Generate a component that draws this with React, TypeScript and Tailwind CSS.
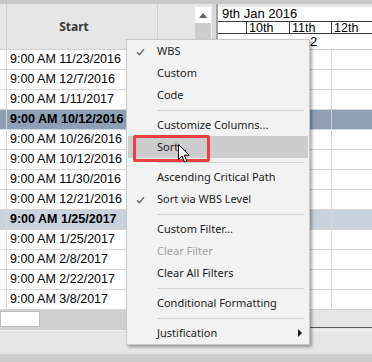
import React from 'react';

type Row = { t: string; hl?: 'dark' | 'light' };

const rows: Row[] = [
  { t: '9:00 AM 11/23/2016' },
  { t: '9:00 AM 12/7/2016' },
  { t: '9:00 AM 1/11/2017' },
  { t: '9:00 AM 10/12/2016', hl: 'dark' },
  { t: '9:00 AM 10/26/2016' },
  { t: '9:00 AM 10/12/2016' },
  { t: '9:00 AM 11/30/2016' },
  { t: '9:00 AM 12/21/2016' },
  { t: '9:00 AM 1/25/2017', hl: 'light' },
  { t: '9:00 AM 1/25/2017' },
  { t: '9:00 AM 2/8/2017' },
  { t: '9:00 AM 2/22/2017' },
  { t: '9:00 AM 3/8/2017' },
];

const rowBg = (r: Row) =>
  r.hl === 'dark' ? 'bg-[#8e9fb6] font-bold' : r.hl === 'light' ? 'bg-[#c9d3dd] font-bold' : 'bg-white';

type Item = { label?: string; check?: boolean; disabled?: boolean; active?: boolean; sub?: boolean; sep?: boolean };

const items: Item[] = [
  { label: 'WBS', check: true },
  { label: 'Custom' },
  { label: 'Code' },
  { sep: true },
  { label: 'Customize Columns...' },
  { label: 'Sort...', active: true },
  { sep: true },
  { label: 'Ascending Critical Path' },
  { label: 'Sort via WBS Level', check: true },
  { sep: true },
  { label: 'Custom Filter...' },
  { label: 'Clear Filter', disabled: true },
  { label: 'Clear All Filters' },
  { sep: true },
  { label: 'Conditional Formatting' },
  { sep: true },
  { label: 'Justification', sub: true },
];

function Check() {
  return (
    <svg width="9" height="8" viewBox="0 0 9 8" className="absolute left-[8px] top-[8px]">
      <path d="M1 4.2 L3.4 6.6 L8 1.2" fill="none" stroke="#6b6b6b" strokeWidth="1.4" />
    </svg>
  );
}

function ContextMenu() {
  return (
    <div className="absolute left-[126px] top-[39px] w-[184px] h-[306px] bg-[#f2f2f2] border border-[#c8c8c8] shadow-[2px_2px_3px_rgba(0,0,0,0.35)] font-['Noto_Sans',sans-serif] text-[11px]">
      {items.map((it, i) =>
        it.sep ? (
          <div key={i} className="h-[8px] flex items-center pl-[30px] pr-[5px]">
            <div className="h-px w-full bg-[#d2d2d2]" />
          </div>
        ) : (
          <div
            key={i}
            className={`relative h-[22px] mx-px flex items-center pl-[29px] ${it.active ? 'bg-[#cdcdcd]' : ''} ${
              it.disabled ? 'text-[#a3a3a3]' : 'text-[#1c1c1c]'
            }`}
          >
            {it.check && <Check />}
            {it.label}
            {it.sub && (
              <svg width="5" height="8" viewBox="0 0 5 8" className="absolute right-[5px] top-[7px]">
                <path d="M0 0 L4 4 L0 8 Z" fill="#1c1c1c" />
              </svg>
            )}
          </div>
        )
      )}
    </div>
  );
}

export default function App() {
  return (
    <div className="relative w-[372px] h-[362px] overflow-hidden bg-[#e6e6e6] font-['Liberation_Sans',Arial,sans-serif] text-[12.5px] text-black">
      <div className="h-[4px] bg-[#c8c8c8]" />
      <div className="flex h-[306px]">
        {/* Task grid */}
        <div className="w-[195px] flex flex-col">
          <div className="h-[46px] flex bg-[#e6e6e6] border-b border-[#cfcfcf]">
            <div className="w-[7px] border-r border-[#cfcfcf]" />
            <div className="w-[151px] border-r border-[#cfcfcf] flex items-center justify-center pr-[16px] font-['Noto_Sans',sans-serif] font-bold text-[12px] text-[#3a3a3a]">
              Start
            </div>
            <div className="flex-1" />
          </div>
          {rows.map((r, i) => (
            <div key={i} className={`h-[20px] flex border-b border-[#d6d6d6] ${rowBg(r)}`}>
              <div className="w-[7px] border-r border-[#d6d6d6]" />
              <div className="w-[151px] border-r border-[#d6d6d6] pl-[3px] flex items-center whitespace-nowrap">{r.t}</div>
              <div className="flex-1" />
            </div>
          ))}
        </div>

        {/* Vertical scrollbar */}
        <div className="w-[16px] flex flex-col pt-[3px] bg-[#e6e6e6]">
          <div className="h-[16px] bg-white flex items-center justify-center">
            <svg width="8" height="5" viewBox="0 0 8 5">
              <path d="M0 5 L4 0 L8 5 Z" fill="#606060" />
            </svg>
          </div>
          <div className="flex-1 bg-[#cdcdcd]" />
        </div>
        <div className="w-[5px] bg-[#d8d8d8] border-l border-[#ededed]" />

        {/* Gantt */}
        <div className="flex-1 flex flex-col pt-[3px] bg-[#e6e6e6] border-l-2 border-[#a3a3a3]">
          <div className="bg-white">
            <div className="h-[15px] border-b border-[#3c3c3c] pl-[4px] text-[13px] leading-[14px]">9th Jan 2016</div>
            <div className="h-[12px] flex border-b border-[#3c3c3c] text-[12.5px] leading-[12px]">
              <div className="w-[29px] border-r border-[#3c3c3c]" />
              <div className="w-[43px] border-r border-[#3c3c3c] pl-[2px]">10th</div>
              <div className="w-[42px] border-r border-[#3c3c3c] pl-[2px]">11th</div>
              <div className="flex-1 pl-[2px]">12th</div>
            </div>
            <div className="h-[16px] border-b border-[#cfcfcf] text-[13px] leading-[16px] pl-[92px]">2</div>
          </div>
          {rows.map((r, i) => (
            <div key={i} className={`h-[20px] flex border-b border-[#d6d6d6] ${rowBg(r)}`}>
              <div className="w-[29px] border-r border-[#d6d6d6]" />
              <div className="w-[43px] border-r border-[#d6d6d6]" />
              <div className="w-[42px] border-r border-[#d6d6d6]" />
              <div className="flex-1" />
            </div>
          ))}
        </div>
      </div>

      {/* Horizontal scroll area */}
      <div className="flex h-[20px]">
        <div className="w-[216px] bg-[#d0d0d0] pt-px">
          <div className="w-[40px] h-[16px] bg-white border border-[#bdbdbd]" />
        </div>
        <div className="flex-1 border-l-2 border-[#a3a3a3] bg-[#e6e6e6]">
          <div className="h-[18px] border-b border-[#555555]" />
        </div>
      </div>
      <div className="h-px bg-[#f2f2f2]" />
      <div className="h-[23px] bg-[#e6e6e6]" />
      <div className="h-[8px] bg-[#cdcdcd]" />

      <ContextMenu />

      {/* Highlight annotation */}
      <div className="absolute left-[133px] top-[135px] w-[77px] h-[27px] border-[3px] border-[#ec4040] rounded-[2px]" />
      <svg width="13" height="20" viewBox="0 0 13 20" className="absolute left-[178px] top-[144px]">
        <path d="M0.5 0.5 L0.5 15.5 L4 12 L6.5 18 L8.8 17 L6.3 11.2 L11 11.2 Z" fill="white" stroke="black" strokeWidth="1" />
      </svg>
    </div>
  );
}
